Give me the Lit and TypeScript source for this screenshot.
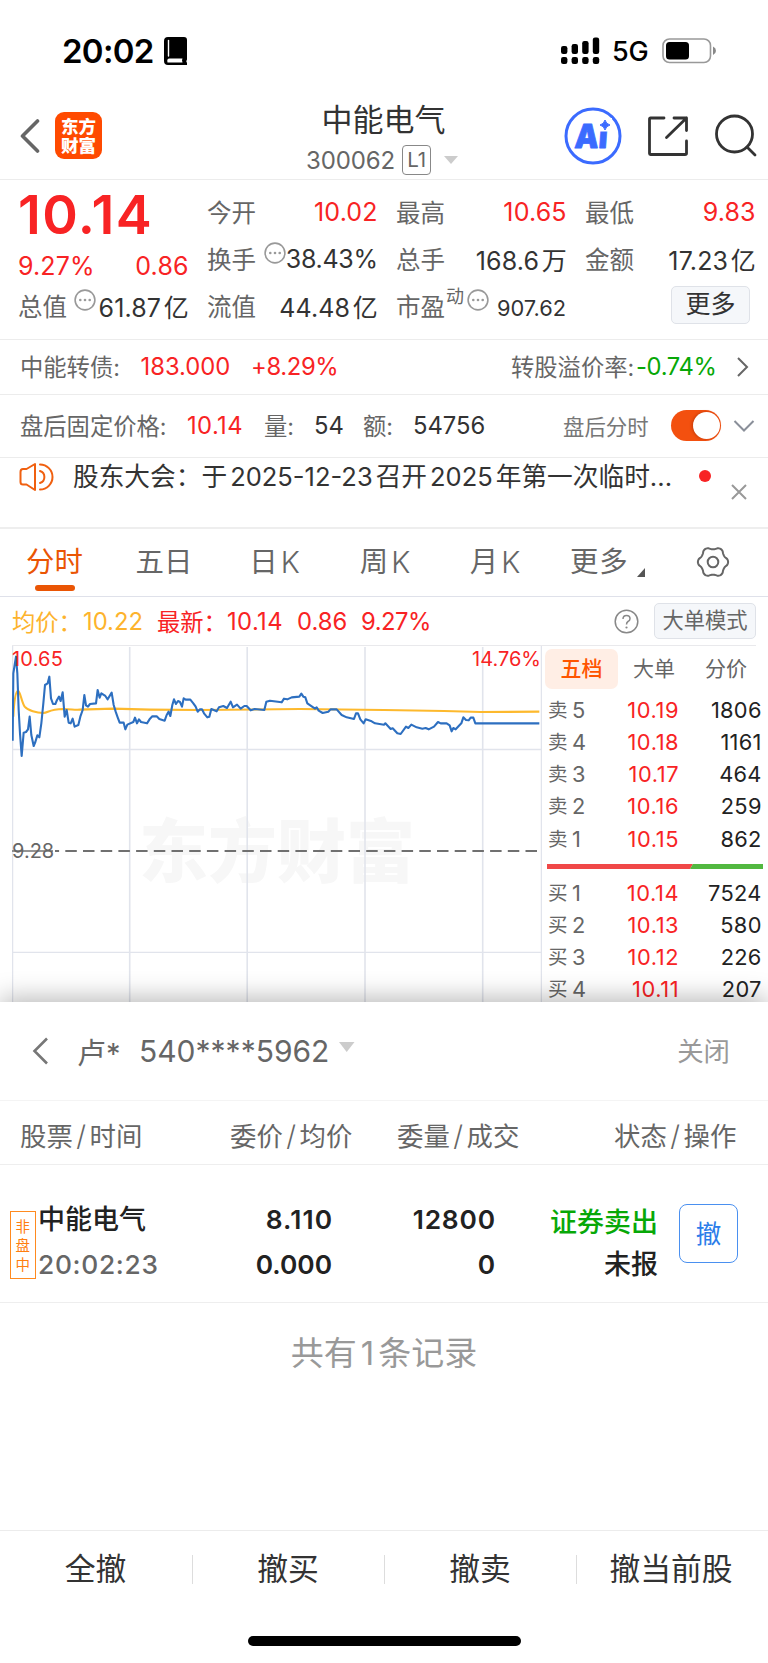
import { LitElement, html, css, svg } from "lit";
import { customElement } from "lit/decorators.js";
import { classMap } from "lit/directives/class-map.js";

const PRICE_LINE =
  "38,632 40,430 44,405 48,380 52,430 56,540 60,610 65,678 71,608 78,606 84,598 89,560 94,615 101,648 106,636 112,616 118,622 124,580 130,520 135,465 143,460 148,440 153,505 159,522 166,522 171,510 177,500 182,513 188,487 194,560 200,540 206,578 212,580 218,566 224,590 235,585 241,560 248,540 253,495 258,526 264,530 270,522 288,520 293,480 299,503 304,490 316,498 323,508 335,488 341,525 347,545 353,562 359,578 371,578 376,598 382,584 400,576 405,563 411,580 417,568 423,576 441,580 450,566 457,559 470,559 478,567 494,572 500,555 506,545 511,558 517,525 522,508 528,522 534,513 540,516 546,530 551,505 557,509 571,509 580,520 587,530 593,545 600,538 606,538 612,550 622,562 628,560 634,537 650,544 657,532 670,528 681,534 692,515 699,532 711,524 722,536 733,528 740,528 752,541 764,537 793,540 799,515 810,512 845,517 852,506 862,508 875,502 898,500 904,491 910,500 916,502 922,520 945,536 950,532 956,542 968,549 985,545 992,538 1010,538 1025,555 1040,562 1062,567 1068,550 1074,550 1081,568 1091,580 1097,568 1115,574 1125,580 1152,584 1156,580 1172,597 1178,595 1192,610 1202,612 1218,590 1225,594 1234,584 1250,592 1267,596 1277,594 1286,598 1302,590 1314,576 1322,580 1340,580 1349,586 1355,604 1360,594 1367,598 1384,580 1390,562 1398,570 1406,571 1412,563 1420,563 1426,580 1618,580";

const AVERAGE_LINE =
  "M40,560 C42,520 46,484 54,482 C62,486 64,515 74,530 C84,542 110,549 130,549 C145,549 145,538 190,537 C220,538 220,540 240,539 L340,536 L450,539 L600,540 L900,537 L1152,540 L1332,543 L1442,546 L1618,545";

const gearPath = () => {
  const pts: string[] = [];
  for (let i = 0; i < 120; i++) {
    const a = (i / 120) * Math.PI * 2;
    const c = Math.cos(6 * a);
    const r = 13.9 + 1.2 * Math.sign(c) * Math.pow(Math.abs(c), 0.7);
    pts.push((17 + r * Math.cos(a)).toFixed(2) + "," + (17 + r * Math.sin(a)).toFixed(2));
  }
  return "M" + pts.join("L") + "Z";
};

const moreDots = svg`<circle cx="11" cy="11" r="9.9" fill="none" stroke="#999" stroke-width="1.6"/>
  <circle cx="6.3" cy="11" r="1.3" fill="#999"/><circle cx="11" cy="11" r="1.3" fill="#999"/><circle cx="15.7" cy="11" r="1.3" fill="#999"/>`;

@customElement("status-bar")
class StatusBar extends LitElement {
  static styles = css`
    :host { display: flex; height: 100px; box-sizing: border-box; padding: 33px 51px 0 62px; align-items: flex-start; color: #000; }
    .time { font-size: 33px; line-height: 36px; font-weight: 600; width: 102px; letter-spacing: -0.7px; }
    .book { margin-top: 4px; }
    .signal { margin: 4px 12px 0 auto; }
    .net { font-size: 27px; line-height: 38px; font-weight: 500; width: 50px; letter-spacing: -0.2px; }
    .battery { margin-top: 5px; }
  `;
  render() {
    return html`
      <span class="time">20:02</span>
      <svg class="book" width="24" height="29" viewBox="0 0 24 29">
        <path d="M4 0H20Q23 0 23 3V22.500Q21.500 24 23 26V28H4Q0 28 0 24V4Q0 0 4 0Z" />
        <path d="M4.500 3.500V19" stroke="#fff" stroke-width="1.400" stroke-linecap="round" />
        <path d="M3.500 25.500Q2.500 21.500 5.500 21.500H18.500Q17.500 23 18.500 25.500Z" fill="#fff" />
      </svg>
      <svg class="signal" width="39" height="27" viewBox="0 0 39 27">
        ${[[0, 9], [10.6, 7], [21.2, 4], [31.8, 0.5]].map(
          ([x, y]) => svg`<rect x=${x} y=${y} width="6.4" height=${17 - y} rx="2.2"/><rect x=${x} y="20" width="6.4" height="7" rx="2.2"/>`
        )}
      </svg>
      <span class="net">5G</span>
      <svg class="battery" width="55" height="26" viewBox="0 0 55 26">
        <rect x="1" y="1" width="47.500" height="23.500" rx="6.500" fill="none" stroke="#999" stroke-width="1.600" />
        <rect x="4" y="4" width="23" height="17.500" rx="3.500" />
        <path d="M51 8.500Q54 10 54 12.700T51 17Z" fill="#888" />
      </svg>
    `;
  }
}

@customElement("stock-header")
class StockHeader extends LitElement {
  static styles = css`
    :host { display: grid; grid-template-columns: 200px 1fr 200px; height: 80px; box-sizing: border-box; border-bottom: 1px solid #ececec; }
    .left { display: flex; padding: 12px 0 0 19px; align-items: flex-start; }
    .back { margin: 6px 15px 0 0; }
    .logo { width: 47px; height: 47px; box-sizing: border-box; border-radius: 9px; background: #ff4a00; color: #fff; font-size: 17.5px; line-height: 19px; font-weight: 900; text-align: center; padding-top: 5px; }
    .mid { display: flex; flex-direction: column; align-items: center; }
    .name { font-size: 31px; line-height: 36px; margin: 2px 1px 0 0; color: #333; white-space: nowrap; }
    .code { display: flex; align-items: center; height: 30px; margin-top: 7px; padding-right: 5px; margin-left: 1px; font-size: 24px; letter-spacing: -0.1px; color: #666; }
    .level { width: 27px; height: 28px; border: 1px solid #888; border-radius: 4px; font-size: 20.5px; line-height: 28px; text-align: center; margin: 0 13px 0 7px; }
    .right { display: flex; align-items: flex-start; padding-top: 7px; }
    .ai { margin: 0 0 0 -4px; }
    .share { margin: 8px 0 0 25px; }
    .search { margin: 7px 0 0 25px; }
    .glyph { font-family: Inter, sans-serif; font-weight: 900; font-size: 33px; }
  `;
  render() {
    return html`
      <div class="left">
        <svg class="back" width="21" height="36" viewBox="0 0 21 36"><path d="M18.500 3L3.500 18L18.500 33" fill="none" stroke="#666" stroke-width="3.600" stroke-linecap="round" stroke-linejoin="round" /></svg>
        <div class="logo">东方<br />财富</div>
      </div>
      <div class="mid">
        <div class="name">中能电气</div>
        <div class="code">300062<span class="level">L1</span><svg width="14" height="8" viewBox="0 0 14 8"><path d="M0 0H14L7 8Z" fill="#ccc" /></svg></div>
      </div>
      <div class="right">
        <svg class="ai" width="58" height="58" viewBox="0 0 58 58">
          <circle cx="29" cy="29" r="27" fill="none" stroke="#3b6bff" stroke-width="3" />
          <g fill="#3b6bff" stroke="#3b6bff" stroke-width="0.800" stroke-linejoin="round" transform="translate(14 40.500) skewX(-4)">
            <text class="glyph" x="-4" y="0" textLength="33" lengthAdjust="spacingAndGlyphs">Ai</text>
          </g>
          <rect x="35" y="11" width="13" height="13.500" fill="#fff" />
          <path d="M41 13Q42 17 46 18Q42 19 41 23Q40 19 36 18Q40 17 41 13Z" fill="#3b6bff" stroke="#3b6bff" stroke-width="1" />
        </svg>
        <svg class="share" width="42" height="42" viewBox="0 0 42 42" fill="none" stroke="#333" stroke-width="2.800" stroke-linecap="round" stroke-linejoin="round">
          <path d="M17 3H3.500Q2.500 3 2.500 4V38.500Q2.500 39.500 3.500 39.500H38Q39.500 39.500 39.500 38.500V26M27 3H39.500V15.500M39.500 3L19.500 22.500" />
        </svg>
        <svg class="search" width="44" height="44" viewBox="0 0 44 44" fill="none" stroke="#333" stroke-width="2.800" stroke-linecap="round">
          <circle cx="20.500" cy="20" r="18" /><path d="M33 33L41 41" />
        </svg>
      </div>
    `;
  }
}

@customElement("quote-panel")
class QuotePanel extends LitElement {
  static styles = css`
    :host { display: grid; grid-template-columns: repeat(4, 169px); column-gap: 20px; height: 160px; box-sizing: border-box; padding: 8px 13px 0 19px; border-bottom: 1px solid #ececec; font-size: 25px; color: #333; }
    .col { display: flex; flex-direction: column; }
    .cell { display: flex; justify-content: space-between; align-items: center; height: 47px; white-space: nowrap; }
    .key { color: #666; font-size: 24.5px; margin-left: -1px; padding-bottom: 1px; }
    .red { color: #f82324; }
    .price { font-size: 54px; line-height: 54px; font-weight: 600; letter-spacing: 1.4px; color: #f82324; height: 62px; margin-left: -1px; }
    .change { height: 32px; }
    .change .num:first-child { margin-left: -1px; }
    .total { height: 47px; }
    .total .dots { margin-right: 2px; }
    .dots { margin: -11px 0 0 auto; display: block; }
    .num { letter-spacing: 0.15px; margin-right: -0.7px; }
    .num.tight { letter-spacing: -0.3px; }
    .unit { margin-left: 2.5px; font-size: 25px; letter-spacing: 0; }
    .sup { font-size: 18px; line-height: 20px; margin: -17px 3px 0 1px; color: #666; }
    .dots.pe { margin-left: 0; }
    .small { margin-left: auto; font-size: 21.8px; padding-top: 5px; }
    .more { align-self: flex-end; margin: 4px 5px 0 0; width: 77px; height: 36px; border: 1.5px solid #dfe2e8; border-radius: 5px; background: #f5f7fa; line-height: 35px; text-align: center; font-size: 25px; }
  `;
  render() {
    const dots = html`<svg class="dots" width="22" height="22" viewBox="0 0 22 22">${moreDots}</svg>`;
    return html`
      <div class="col">
        <div class="price">10.14</div>
        <div class="cell change red"><span class="num">9.27%</span><span class="num">0.86</span></div>
        <div class="cell total"><span class="key">总值</span>${dots}<span class="num">61.87<span class="unit">亿</span></span></div>
      </div>
      <div class="col">
        <div class="cell"><span class="key">今开</span><span class="num red">10.02</span></div>
        <div class="cell"><span class="key">换手</span>${dots}<span class="num tight">38.43%</span></div>
        <div class="cell"><span class="key">流值</span><span class="num">44.48<span class="unit">亿</span></span></div>
      </div>
      <div class="col">
        <div class="cell"><span class="key">最高</span><span class="num red">10.65</span></div>
        <div class="cell"><span class="key">总手</span><span class="num">168.6<span class="unit">万</span></span></div>
        <div class="cell"><span class="key">市盈</span><span class="sup">动</span><svg class="dots pe" width="22" height="22" viewBox="0 0 22 22">${moreDots}</svg><span class="small">907.62</span></div>
      </div>
      <div class="col">
        <div class="cell"><span class="key">最低</span><span class="num red">9.83</span></div>
        <div class="cell"><span class="key">金额</span><span class="num">17.23<span class="unit">亿</span></span></div>
        <div class="more">更多</div>
      </div>
    `;
  }
}

@customElement("info-rows")
class InfoRows extends LitElement {
  static styles = css`
    :host { display: block; color: #333; font-size: 23.8px; }
    .row { display: grid; align-items: center; box-sizing: border-box; padding-left: 20px; border-bottom: 1px solid #ececec; white-space: nowrap; }
    .bond { grid-template-columns: 120.5px 110.5px 260px 125px 100px auto; height: 55px; padding-bottom: 1px; }
    .pct { letter-spacing: -0.35px; }
    .after { grid-template-columns: 167px 77px 50px 49px 50px 150px 108px 62px auto; height: 63px; padding-bottom: 1px; }
    .wide { letter-spacing: 0.4px; }
    .notice { grid-template-columns: 54px 623px 1fr; height: 71px; border-bottom: 2px solid #eee; align-items: start; padding-left: 19px; }
    .key { color: #666; font-size: 23.3px; padding-bottom: 1px; }
    .red { color: #f82324; }
    .green { color: #07a807; }
    .label { color: #777; font-size: 21.4px; padding-bottom: 1px; }
    .switch { width: 50px; height: 31px; border-radius: 16px; background: #f3500f; display: flex; justify-content: flex-end; align-items: center; box-sizing: border-box; padding-right: 1.5px; }
    .knob { width: 27px; height: 27px; border-radius: 50%; background: #fff; box-shadow: -1px 0 3px rgba(120, 30, 0, 0.4); }
    .speaker { margin-top: 4px; }
    .text { font-size: 25.7px; line-height: 38px; display: flex; }
    .date { margin: 0 3px; font-size: 25.5px; }
    .tail { display: flex; align-items: flex-start; }
    .dot { width: 12px; height: 12px; border-radius: 50%; background: #f82324; margin: 12px 20px 0 3px; }
    .close { margin-top: 26px; }
  `;
  render() {
    return html`
      <div class="row bond">
        <span class="key">中能转债:</span><span class="red">183.000</span><span class="red pct">+8.29%</span>
        <span class="key">转股溢价率:</span><span class="green pct">-0.74%</span>
        <svg width="14" height="22" viewBox="0 0 14 22"><path d="M2 2L11 11L2 20" fill="none" stroke="#666" stroke-width="2" /></svg>
      </div>
      <div class="row after">
        <span class="key">盘后固定价格:</span><span class="red wide">10.14</span><span class="key">量:</span><span>54</span>
        <span class="key">额:</span><span>54756</span><span class="label">盘后分时</span>
        <span class="switch"><span class="knob"></span></span>
        <svg width="22" height="14" viewBox="0 0 22 14"><path d="M1.500 2L11 11.500L20.500 2" fill="none" stroke="#8a8f99" stroke-width="2" /></svg>
      </div>
      <div class="row notice">
        <svg class="speaker" width="36" height="30" viewBox="0 0 36 30" fill="none" stroke="#f06010" stroke-width="2" stroke-linecap="round" stroke-linejoin="round">
          <path d="M16 2V28L7.500 22.500H4Q1.500 22.500 1.500 20V10Q1.500 7 4 7H7.500Z" />
          <path d="M21 2.500A12.300 12.300 0 0 1 21 27.500M21 9A6.300 6.300 0 0 1 21 21" />
        </svg>
        <div class="text">股东大会：于<span class="date">2025-12-23</span>召开<span class="date">2025</span>年第一次临时...</div>
        <div class="tail"><span class="dot"></span>
          <svg class="close" width="16" height="16" viewBox="0 0 16 16"><path d="M1 1L15 15M15 1L1 15" stroke="#999" stroke-width="2" /></svg></div>
      </div>
    `;
  }
}

@customElement("period-tabs")
class PeriodTabs extends LitElement {
  static styles = css`
    :host { display: grid; grid-template-columns: 109px 110px 111px 110px 110px 146px auto; height: 68px; box-sizing: border-box; border-bottom: 1.5px solid #dfe1ea; font-size: 28.4px; color: #666; }
    .tab { display: flex; justify-content: center; line-height: 66px; position: relative; }
    .k { margin-left: 3px; font-size: 29.5px; font-weight: 350; }
    .on { color: #ea5504; }
    .bar { position: absolute; left: 35px; bottom: 5.5px; width: 40px; height: 6px; border-radius: 3px; background: #ea5504; }
    .more { justify-content: flex-start; padding-left: 20px; letter-spacing: 0.8px; }
    .corner { margin: 39px 0 0 9px; }
    .gear { margin-top: 16px; }
  `;
  render() {
    const tab = (name: string, k = false, on = false) =>
      html`<span class=${classMap({ tab: true, on })}>${name}${k ? html`<span class="k">K</span>` : ""}${on ? html`<span class="bar"></span>` : ""}</span>`;
    return html`
      ${tab("分时", false, true)}${tab("五日")}${tab("日", true)}${tab("周", true)}${tab("月", true)}
      <span class="tab more">更多<svg class="corner" width="8" height="9" viewBox="0 0 8 9"><path d="M8 0V9H0Z" fill="#555" /></svg></span>
      <svg class="gear" width="34" height="34" viewBox="0 0 34 34" fill="none" stroke="#666" stroke-width="2"><path d=${gearPath()} /><circle cx="17" cy="17" r="5.300" /></svg>
    `;
  }
}

@customElement("intraday-chart")
class IntradayChart extends LitElement {
  static styles = css`
    :host { display: block; padding: 0 12px; height: 405px; box-sizing: border-box; overflow: hidden; }
    .legend { display: grid; grid-template-columns: 71px 74px 70px 70px 64px 1fr auto auto; align-items: center; height: 49px; font-size: 23.8px; color: #f82324; box-sizing: border-box; border-bottom: 1.5px solid #e9e9ec; white-space: nowrap; }
    .avg { color: #fdb32d; }
    .cn { font-size: 23.3px; }
    .wide { letter-spacing: 0.4px; }
    .pct { letter-spacing: -0.5px; }
    .help { width: 25px; height: 25px; margin-right: 15px; }
    .mode { width: 100px; height: 34px; border: 1.5px solid #dfe2e8; border-radius: 5px; background: #f5f7fa; color: #666; font-size: 21.3px; line-height: 33px; text-align: center; }
    .body { display: flex; }
    .plot { flex: 0 0 530px; display: block; }
    .book { flex: 0 0 223px; margin: 3px -10px 0 3px; font-size: 21.8px; }
    .heads { display: flex; height: 40px; line-height: 40px; font-size: 21px; color: #666; margin-bottom: 5px; }
    .head { width: 72px; text-align: center; }
    .head.on { width: 73px; border-radius: 7px; background: #ffeee5; color: #ff5500; font-weight: 500; }
    .line { display: grid; grid-template-columns: 24px 106px 1fr; height: 32.15px; line-height: 32.15px; padding: 0 6.3px 0 3px; }
    .side { font-size: 19.5px; color: #666; }
    .lvl { color: #666; display: flex; justify-content: space-between; }
    .px { color: #f82324; letter-spacing: 0.6px; margin-right: -1.2px; }
    .vol { color: #222; text-align: right; letter-spacing: 0.3px; }
    .ratio { display: block; margin: 9px 0 8px 2px; }
    .glyphs { font-family: Inter, "Noto Sans CJK SC", sans-serif; }
  `;
  render() {
    const sells = [["5", "10.19", "1806"], ["4", "10.18", "1161"], ["3", "10.17", "464"], ["2", "10.16", "259"], ["1", "10.15", "862"]];
    const buys = [["1", "10.14", "7524"], ["2", "10.13", "580"], ["3", "10.12", "226"], ["4", "10.11", "207"]];
    const line = (side: string, r: string[]) =>
      html`<div class="line"><span class="side">${side}</span><span class="lvl"><span>${r[0]}</span><span class="px">${r[1]}</span></span><span class="vol">${r[2]}</span></div>`;
    return html`
      <div class="legend">
        <span class="avg cn">均价：</span><span class="avg">10.22</span><span class="cn">最新：</span><span class="wide">10.14</span><span>0.86</span><span class="pct">9.27%</span>
        <svg class="help" viewBox="0 0 25 25"><circle cx="12.500" cy="12.500" r="11.300" fill="none" stroke="#888" stroke-width="1.500" /><path d="M9 10Q9 6.500 12.500 6.500T16 9.700Q16 11.500 14 12.500Q12.500 13.400 12.500 15.500" fill="none" stroke="#888" stroke-width="1.500" /><circle cx="12.500" cy="18.500" r="1.100" fill="#888" /></svg>
        <span class="mode">大单模式</span>
      </div>
      <div class="body">
        <svg class="plot" width="530" height="357" viewBox="12 646 530 357">
          <text class="glyphs" x="139" y="877" font-size="69" font-weight="900" fill="#f7f7f7">东方财富</text>
          <g stroke="#e1e4ec" stroke-width="1.300"><path d="M12.600 646V1003M541.400 646V1003M12 749.500H542M12 952.300H542" /><path d="M129.700 647V1003M247.200 647V1003M365 647V1003M482.700 647V1003" stroke-width="1.600" /></g>
          <path d="M55 851H541" stroke="#707070" stroke-width="2.200" stroke-dasharray="11.500 6.200" stroke-dashoffset="7.400" />
          <path d="M12 851H53" stroke="#707070" stroke-width="1.600" />
          <g transform="translate(0 530) scale(0.33333)" fill="none" stroke-linejoin="round">
            <path d=${AVERAGE_LINE} stroke="#fdb92d" stroke-width="6.300" />
            <polyline points=${PRICE_LINE} stroke="#2d6fc0" stroke-width="6.300" />
          </g>
          <g class="glyphs" font-size="20">
            <text x="12" y="665.500" fill="#f82324" letter-spacing="0.200">10.65</text>
            <text x="541" y="665.500" fill="#f82324" text-anchor="end">14.76%</text>
            <text x="12" y="858" fill="#666">9.28</text>
          </g>
        </svg>
        <div class="book">
          <div class="heads"><span class="head on">五档</span><span class="head">大单</span><span class="head">分价</span></div>
          ${sells.map((r) => line("卖", r))}
          <svg class="ratio" width="216" height="5" viewBox="0 0 216 5"><path d="M0 0H146L143 5H0Z" fill="#f04848" /><path d="M146 0H216V5H143Z" fill="#52b840" /></svg>
          ${buys.map((r) => line("买", r))}
        </div>
      </div>
    `;
  }
}

@customElement("order-sheet")
class OrderSheet extends LitElement {
  static styles = css`
    :host { display: block; height: 661px; background: #fff; position: relative; box-shadow: 0 -4px 24px rgba(0, 0, 0, 0.28); color: #222; white-space: nowrap; }
    .account { display: flex; align-items: center; height: 99px; box-sizing: border-box; border-bottom: 1.5px solid #f4f4f4; padding: 0 38px 0 32px; color: #666; font-size: 30px; }
    .holder { font-size: 29px; width: 62px; margin-left: 28px; padding-bottom: 1px; }
    .down { margin: -9px 0 0 10px; }
    .shut { margin-left: auto; color: #999; font-size: 26.4px; padding-bottom: 3px; }
    .heads { display: grid; grid-template-columns: 210px 167px 217px auto; height: 64px; padding-left: 20px; align-items: center; box-sizing: border-box; border-bottom: 1px solid #eee; color: #666; font-size: 26.4px; padding-top: 3px; }
    .slash { margin: 0 3.5px; font-size: 28px; line-height: 28px; font-weight: 300; }
    .order { display: grid; grid-template-columns: 26px 120px 176px 163px 163px auto; height: 138px; box-sizing: border-box; border-bottom: 1px solid #eee; padding: 31.5px 0 0 10px; font-size: 26.3px; font-weight: 600; }
    .badge { width: 23.5px; height: 61px; border: 1.5px solid #ff8a1f; color: #ff7e0f; font-size: 14.5px; line-height: 19.3px; font-weight: 400; margin-top: 14px; padding-top: 5px; text-align: center; white-space: normal; }
    .pair { display: flex; flex-direction: column; line-height: 45px; text-align: right; }
    .price { letter-spacing: 1.1px; margin-right: -1.1px; }
    .who { text-align: left; padding-left: 2px; }
    .cn { font-weight: 500; font-size: 27px; }
    .qty { letter-spacing: 0.8px; margin-right: -0.8px; }
    .gray { color: #666; font-weight: 500; letter-spacing: 0.7px; }
    .green { color: #07a807; padding-top: 6px; line-height: 39px; }
    .cancel { width: 57px; height: 57px; border: 1.5px solid #4a90f0; border-radius: 8px; color: #2b7de9; font-size: 25.5px; line-height: 57px; text-align: center; font-weight: 400; margin: 7.5px 0 0 21px; }
    .count { height: 227px; box-sizing: border-box; padding-top: 30px; text-align: center; font-size: 33px; line-height: 40px; color: #999; }
    .one { margin: 0 4px; }
    .actions { display: grid; grid-template-columns: 193px 192px 192px 191px; height: 106px; box-sizing: border-box; border-top: 1.5px solid #ececec; padding-top: 24px; font-size: 30.8px; line-height: 27px; color: #333; }
    .action { text-align: center; height: 29px; box-sizing: border-box; border-right: 1.5px solid #ddd; padding-right: 1px; }
    .action:last-child { border: 0; padding-right: 3px; }
    .home { width: 273px; height: 10px; border-radius: 5px; background: #000; margin: 0 auto; }
  `;
  render() {
    const head = (a: string, b: string) => html`<span>${a}<span class="slash">/</span>${b}</span>`;
    return html`
      <div class="account">
        <svg width="17" height="28" viewBox="0 0 17 28"><path d="M15 1.500L2.500 14L15 26.500" fill="none" stroke="#777" stroke-width="2.600" /></svg>
        <span class="holder">卢*</span><span>540****5962</span>
        <svg class="down" width="16" height="10" viewBox="0 0 16 10"><path d="M0 0H15.500L7.700 10Z" fill="#ccc" /></svg>
        <span class="shut">关闭</span>
      </div>
      <div class="heads">${head("股票", "时间")}${head("委价", "均价")}${head("委量", "成交")}${head("状态", "操作")}</div>
      <div class="order">
        <div class="badge">非<br />盘<br />中</div>
        <div class="pair who"><span class="cn">中能电气</span><span class="gray">20:02:23</span></div>
        <div class="pair"><span class="price">8.110</span><span>0.000</span></div>
        <div class="pair"><span class="qty">12800</span><span>0</span></div>
        <div class="pair"><span class="cn green">证券卖出</span><span class="cn">未报</span></div>
        <div class="cancel">撤</div>
      </div>
      <div class="count">共有<span class="one">1</span>条记录</div>
      <div class="actions"><span class="action">全撤</span><span class="action">撤买</span><span class="action">撤卖</span><span class="action">撤当前股</span></div>
      <div class="home"></div>
    `;
  }
}

@customElement("app-root")
class AppRoot extends LitElement {
  static styles = css`
    :host { display: block; width: 768px; height: 1663px; overflow: hidden; background: #fff; font-family: Inter, "Noto Sans CJK SC", sans-serif; }
  `;
  render() {
    return html`
      <status-bar></status-bar>
      <stock-header></stock-header>
      <quote-panel></quote-panel>
      <info-rows></info-rows>
      <period-tabs></period-tabs>
      <intraday-chart></intraday-chart>
      <order-sheet></order-sheet>
    `;
  }
}
